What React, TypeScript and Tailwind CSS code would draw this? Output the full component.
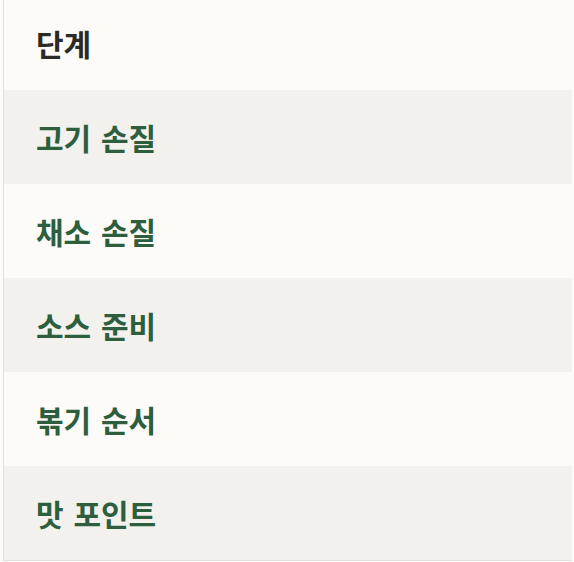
const steps = ["고기 손질", "채소 손질", "소스 준비", "볶기 순서", "맛 포인트"];

export default function App() {
	return (
		<div
			className="w-[574px] h-[562px] bg-[#fcfbf8] overflow-hidden"
			style={{ fontFamily: '"Noto Sans CJK KR", "Noto Sans", sans-serif' }}
		>
			<div className="ml-[3px] w-[569px] border-l border-b border-[#e4e1dc]">
				<div className="h-[90px] flex items-center pl-8 pb-[5px] bg-[#fcfbf8]">
					<span className="text-[30px] font-bold text-[#2b2a27] leading-none">단계</span>
				</div>
				{steps.map((step, i) => (
					<div
						key={step}
						className={
							i % 2 === 0
								? "h-[94px] flex items-center pl-8 bg-[#f2f1ed]"
								: "h-[94px] flex items-center pl-8 bg-[#fcfbf8]"
						}
					>
						<span className="text-[30px] font-bold text-[#2d5e3e] leading-none [word-spacing:3px]">
							{step}
						</span>
					</div>
				))}
			</div>
		</div>
	);
}
